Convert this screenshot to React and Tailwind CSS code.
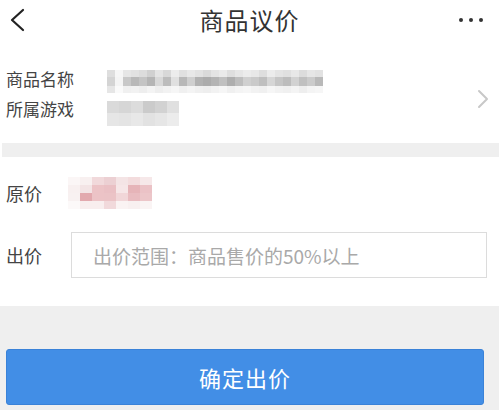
import React from 'react';

const font = { fontFamily: "'Noto Sans CJK SC', 'Noto Sans', sans-serif" };

// pixelated (blurred-out) data, one colour per cell
const nameMid = [
  '#d4d4d4', '#f4f4f4', '#c8c8c8', '#b9b9b9', '#c4c4c4', '#b5b5b5', '#d8d8d8', '#bcbcbc', '#e0e0e0', '#b8b8b8',
  '#cfcfcf', '#b2b2b2', '#acacac', '#b4b4b4', '#c0c0c0', '#aeaeae', '#bebebe', '#d0d0d0', '#cacaca', '#bfbfbf',
  '#d6d6d6', '#c6c6c6', '#bdbdbd', '#d2d2d2', '#c0c0c0', '#cbcbcb', '#b9b9b9',
];
const nameTop = [
  '#dedede', '#f6f6f6', '#e6e6e6', '#e2e2e2', '#dcdcdc', '#d0d0d0', '#e4e4e4', '#d8d8d8', '#ececec', '#e0e0e0',
  '#e8e8e8', '#e2e2e2', '#dadada', '#e4e4e4', '#eaeaea', '#dedede', '#e6e6e6', '#ececec', '#e8e8e8', '#dedede',
  '#ececec', '#e4e4e4', '#e0e0e0', '#e8e8e8', '#dcdcdc', '#e6e6e6', '#e2e2e2',
];
const nameBot = [
  '#e6e6e6', '#fafafa', '#f0f0f0', '#f2f2f2', '#eeeeee', '#f4f4f4', '#eeeeee', '#f2f2f2', '#f6f6f6', '#f0f0f0',
  '#f4f4f4', '#f0f0f0', '#eeeeee', '#f2f2f2', '#f6f6f6', '#f0f0f0', '#f4f4f4', '#f6f6f6', '#f2f2f2', '#f0f0f0',
  '#f6f6f6', '#f2f2f2', '#f0f0f0', '#f4f4f4', '#eeeeee', '#f4f4f4', '#f6f6f6',
];
const game = [
  ['#dadada', '#d6d6d6', '#dcdcdc', '#cbcbcb', '#d2d2d2', '#e0e0e0'],
  ['#e6e6e6', '#e4e4e4', '#e8e8e8', '#e2e2e2', '#e6e6e6', '#ececec'],
];
const price = [
  ['#fbf6f6', '#f8f0f0', '#f1d9db', '#ecd0d3', '#f4e4e5', '#f3dcdd', '#f6e8e9'],
  ['#f8f0f0', '#f3e4e5', '#ecc3c6', '#eac0c4', '#f6e6e7', '#e6b4b8', '#ebc2c6'],
  ['#f8f1f1', '#e2a9ae', '#ecc3c6', '#ebc3c6', '#f1d6d8', '#e9bcc0', '#ecc6c9'],
  ['#fcf9f9', '#f8eeee', '#f8eeee', '#f1d9db', '#faf3f3', '#f8f0f0', '#faf4f4'],
];

const Mosaic = ({ rows, cell, heights }) => (
  <div className="flex flex-col">
    {rows.map((row, i) => (
      <div key={i} className="flex">
        {row.map((c, j) => (
          <div key={j} style={{ width: cell, height: heights[i], backgroundColor: c }} />
        ))}
      </div>
    ))}
  </div>
);

export default function App() {
  return (
    <div style={font} className="w-[501px] h-[410px] bg-white overflow-hidden flex flex-col">
      {/* Header */}
      <div className="h-[40px] shrink-0 flex items-center justify-between pl-[9px] pr-[18px]">
        <svg width="17" height="24" viewBox="0 0 17 24" fill="none">
          <path d="M14 2 L3 12 L14 22" stroke="#222" strokeWidth="2.2" strokeLinecap="round" strokeLinejoin="round" />
        </svg>
        <h1 className="text-[24px] leading-none text-[#333] tracking-[1px] ml-[14px]">商品议价</h1>
        <div className="flex gap-[6px] items-center">
          <span className="w-[4px] h-[4px] rounded-full bg-[#333]" />
          <span className="w-[4px] h-[4px] rounded-full bg-[#333]" />
          <span className="w-[4px] h-[4px] rounded-full bg-[#333]" />
        </div>
      </div>

      {/* Item info */}
      <div className="flex items-center pt-[24px] pb-[19px] pl-[6px] pr-[12px]">
        <div className="flex-1 flex flex-col">
          <div className="h-[30px] flex items-center">
            <span className="w-[101px] text-[17px] text-[#444]">商品名称</span>
            <div className="mt-[4px]">
              <Mosaic rows={[nameTop, nameMid, nameBot]} cell={8} heights={[7, 9, 7]} />
            </div>
          </div>
          <div className="h-[30px] flex items-center">
            <span className="w-[101px] text-[17px] text-[#444]">所属游戏</span>
            <div className="mt-[8px]">
              <Mosaic rows={game} cell={12} heights={[12, 13]} />
            </div>
          </div>
        </div>
        <svg width="12" height="20" viewBox="0 0 12 20" fill="none" className="mt-[10px]">
          <path d="M2 2 L10 10 L2 18" stroke="#c8c8c8" strokeWidth="2" strokeLinecap="round" strokeLinejoin="round" />
        </svg>
      </div>

      <div className="h-[14px] shrink-0 bg-[#efefef] ml-[2px] mr-[2px]" />

      {/* Price */}
      <div className="pl-[6px] pr-[14px] pt-[18px] pb-[28px]">
        <div className="h-[36px] flex items-center">
          <span className="w-[62px] text-[18px] text-[#444]">原价</span>
          <Mosaic rows={price} cell={12} heights={[8, 8, 8, 8]} />
        </div>
        <div className="mt-[21px] flex items-center">
          <span className="w-[65px] text-[18px] text-[#444]">出价</span>
          <input
            placeholder="出价范围：商品售价的50%以上"
            className="flex-1 h-[46px] border border-[#dcdcdc] px-[21px] text-[19px] outline-none placeholder:text-[#a9a9a9]"
            style={font}
          />
        </div>
      </div>

      {/* Submit */}
      <div className="flex-1 bg-[#efefef] pt-[43px] pl-[6px] mr-[2px]">
        <button className="w-[478px] h-[56px] rounded-[3px] bg-[#428ee6] border border-[#3a82d8] text-white text-[22px] tracking-[1px]">
          确定出价
        </button>
      </div>
    </div>
  );
}
